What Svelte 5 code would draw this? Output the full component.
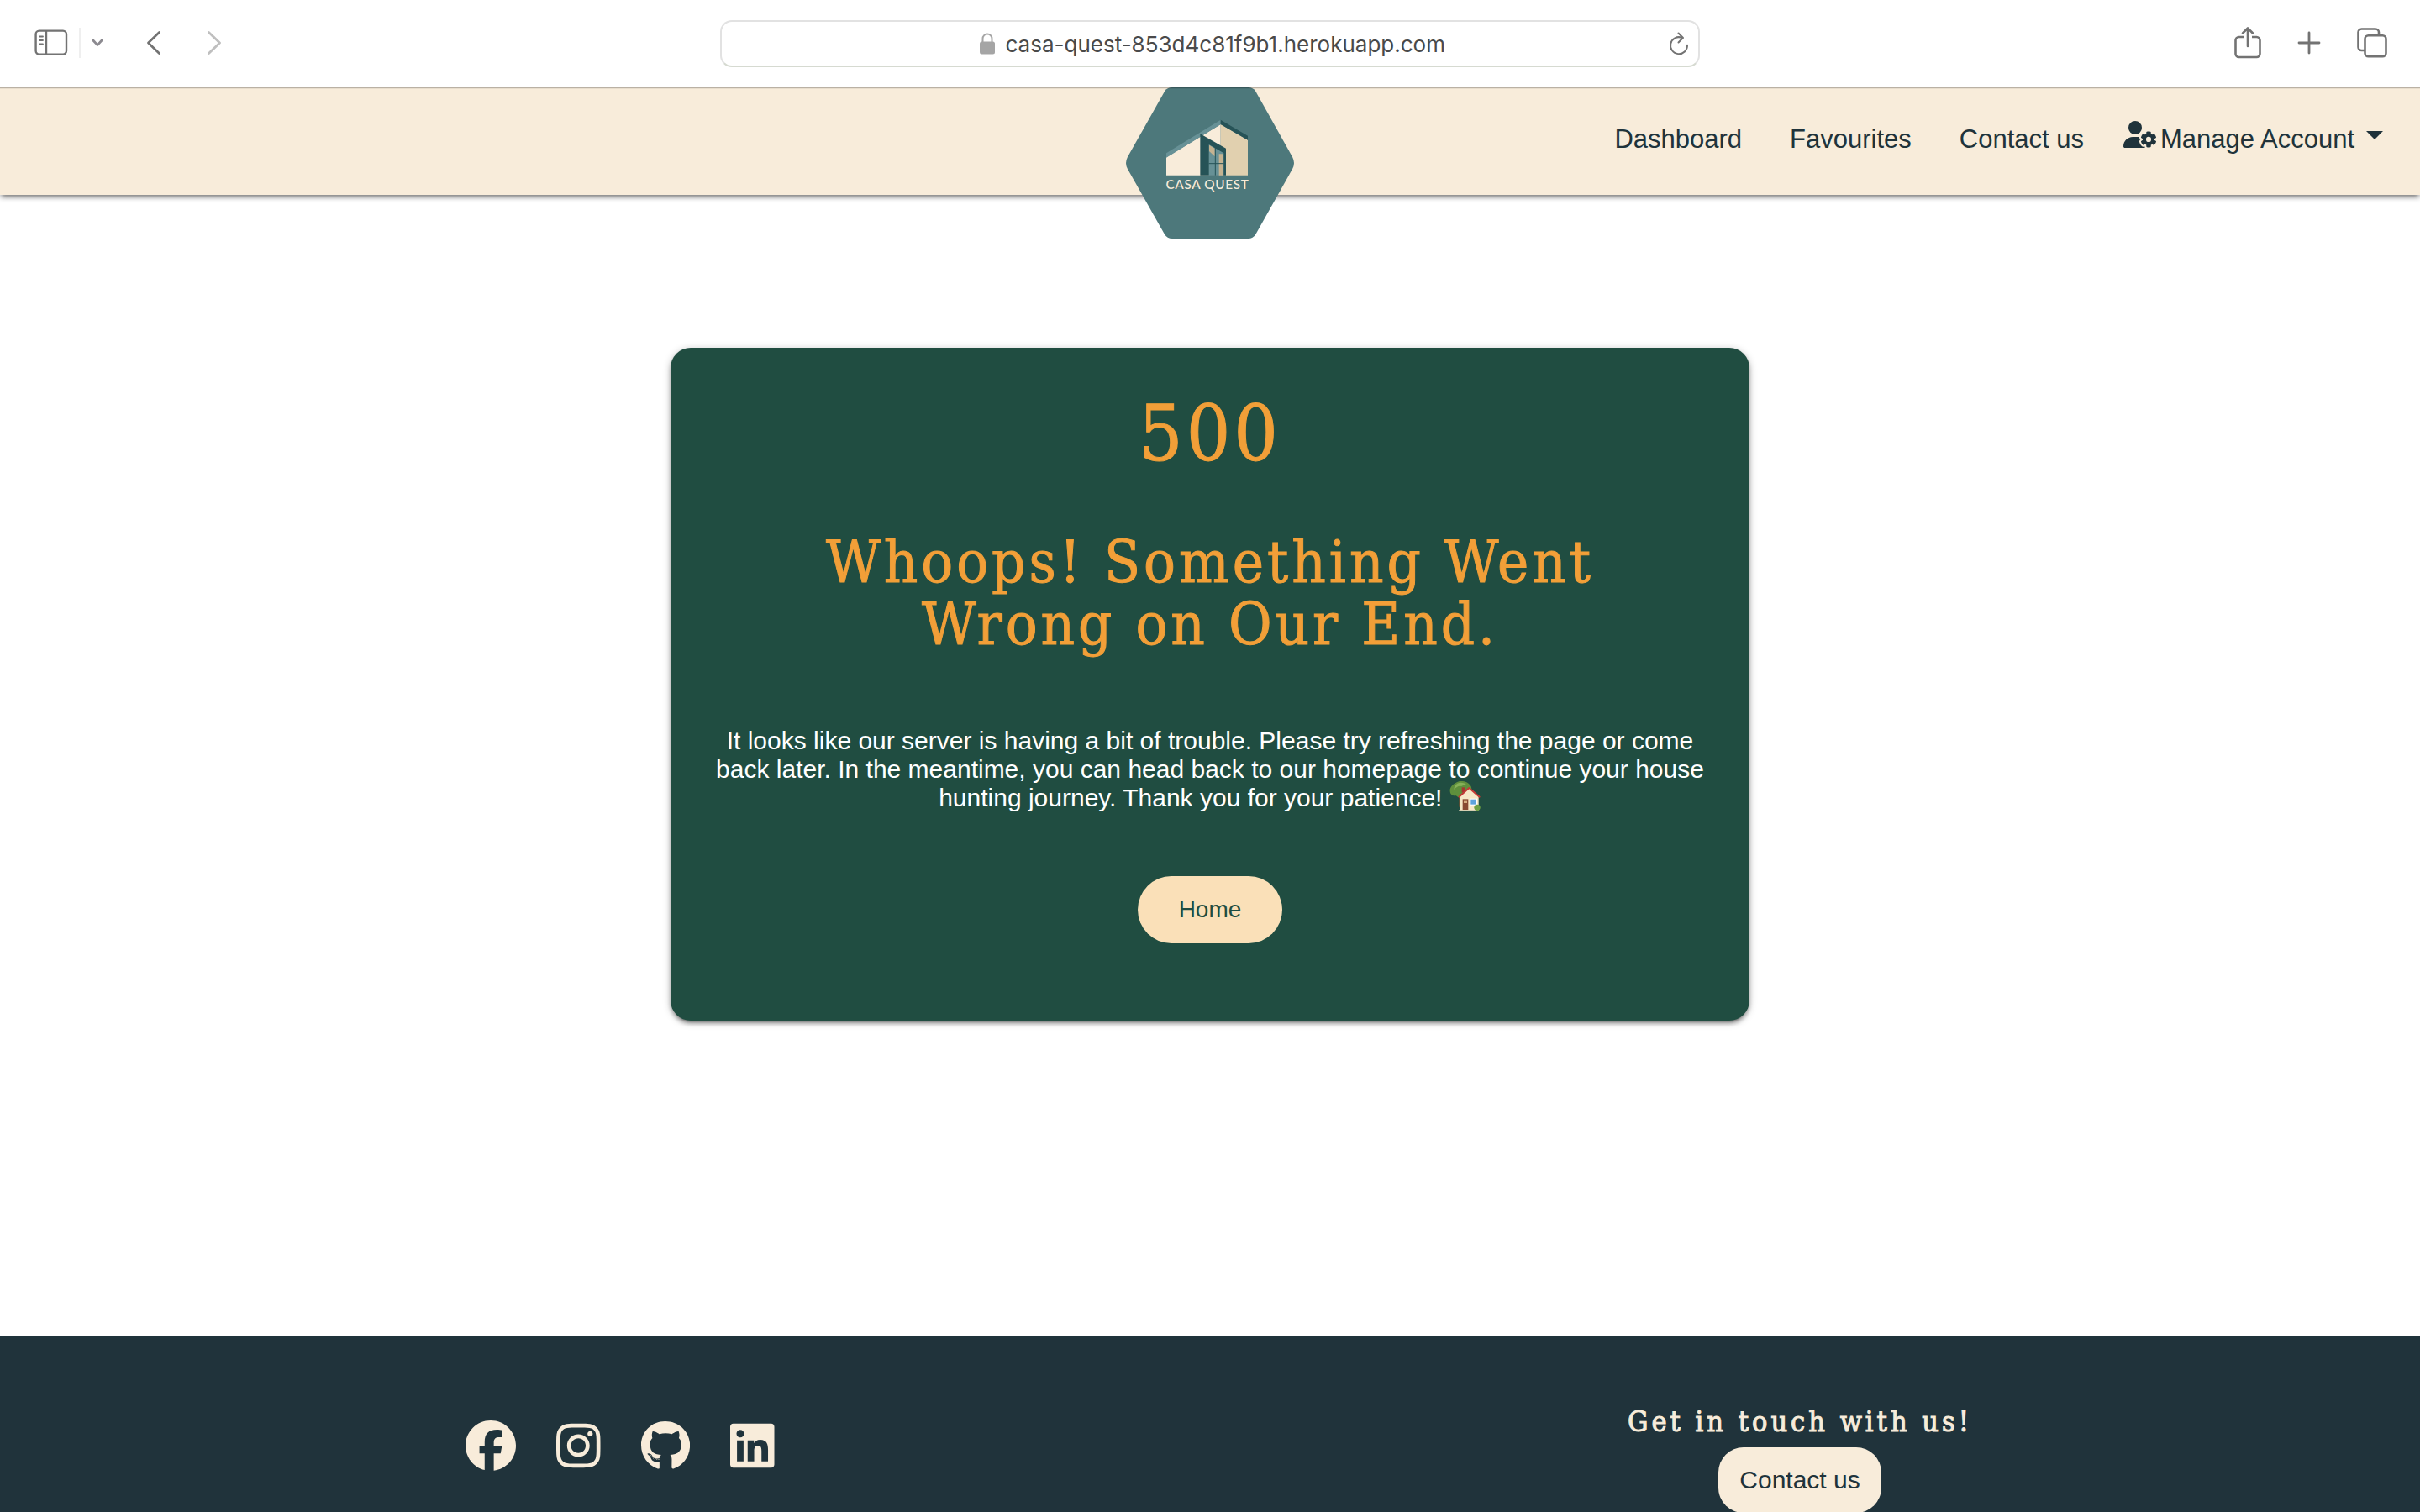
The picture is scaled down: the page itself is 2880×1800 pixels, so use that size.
<script>
  const socials = [
    {
      name: 'Facebook',
      width: 512,
      path: 'M512 256C512 114.6 397.4 0 256 0S0 114.6 0 256C0 376 82.7 476.8 194.2 504.5V334.2H141.4V256h52.8V222.3c0-87.1 39.4-127.5 125-127.5c16.2 0 44.2 3.2 55.7 6.4V172c-6-.6-16.5-1-29.6-1c-42 0-58.2 15.9-58.2 57.2V256h83.6l-14.4 78.2H287V510.1C413.8 494.8 512 386.9 512 256h0z'
    },
    {
      name: 'Instagram',
      width: 448,
      path: 'M224.1 141c-63.6 0-114.9 51.3-114.9 114.9s51.3 114.9 114.9 114.9S339 319.5 339 255.9 287.7 141 224.1 141zm0 189.6c-41.1 0-74.7-33.5-74.7-74.7s33.5-74.7 74.7-74.7 74.7 33.5 74.7 74.7-33.6 74.7-74.7 74.7zm146.4-194.3c0 14.9-12 26.8-26.8 26.8-14.9 0-26.8-12-26.8-26.8s12-26.8 26.8-26.8 26.8 12 26.8 26.8zm76.1 27.2c-1.7-35.9-9.9-67.7-36.2-93.9-26.2-26.2-58-34.4-93.9-36.2-37-2.1-147.9-2.1-184.9 0-35.8 1.7-67.6 9.9-93.9 36.1s-34.4 58-36.2 93.9c-2.1 37-2.1 147.9 0 184.9 1.7 35.9 9.9 67.7 36.2 93.9s58 34.4 93.9 36.2c37 2.1 147.9 2.1 184.9 0 35.9-1.7 67.7-9.9 93.9-36.2 26.2-26.2 34.4-58 36.2-93.9 2.1-37 2.1-147.8 0-184.8zM398.8 388c-7.8 19.6-22.9 34.7-42.6 42.6-29.5 11.7-99.5 9-132.1 9s-102.7 2.6-132.1-9c-19.6-7.8-34.7-22.9-42.6-42.6-11.7-29.5-9-99.5-9-132.1s-2.6-102.7 9-132.1c7.8-19.6 22.9-34.7 42.6-42.6 29.5-11.7 99.5-9 132.1-9s102.7-2.6 132.1 9c19.6 7.8 34.7 22.9 42.6 42.6 11.7 29.5 9 99.5 9 132.1s2.7 102.7-9 132.1z'
    },
    {
      name: 'GitHub',
      width: 496,
      path: 'M165.9 397.4c0 2-2.3 3.6-5.2 3.6-3.3.3-5.6-1.3-5.6-3.6 0-2 2.3-3.6 5.2-3.6 3-.3 5.6 1.3 5.6 3.6zm-31.1-4.5c-.7 2 1.3 4.3 4.3 4.9 2.6 1 5.6 0 6.2-2s-1.3-4.3-4.3-5.2c-2.6-.7-5.5.3-6.2 2.3zm44.2-1.7c-2.9.7-4.9 2.6-4.6 4.9.3 2 2.9 3.3 5.9 2.6 2.9-.7 4.9-2.6 4.6-4.6-.3-1.9-3-3.2-5.9-2.9zM244.8 8C106.1 8 0 113.3 0 252c0 110.9 69.8 205.8 169.5 239.2 12.8 2.3 17.3-5.6 17.3-12.1 0-6.2-.3-40.4-.3-61.4 0 0-70 15-84.7-29.8 0 0-11.4-29.1-27.8-36.6 0 0-22.9-15.7 1.6-15.4 0 0 24.9 2 38.6 25.8 21.9 38.6 58.6 27.5 72.9 20.9 2.3-16 8.8-27.1 16-33.7-55.9-6.2-112.3-14.3-112.3-110.5 0-27.5 7.6-41.3 23.6-58.9-2.6-6.5-11.1-33.3 2.6-67.9 20.9-6.5 69 27 69 27 20-5.6 41.5-8.5 62.8-8.5s42.8 2.9 62.8 8.5c0 0 48.1-33.6 69-27 13.7 34.7 5.2 61.4 2.6 67.9 16 17.7 25.8 31.5 25.8 58.9 0 96.5-58.9 104.2-114.8 110.5 9.2 7.9 17 22.9 17 46.4 0 33.7-.3 75.4-.3 83.6 0 6.5 4.6 14.4 17.3 12.1C428.2 457.8 496 362.9 496 252 496 113.3 383.5 8 244.8 8zM97.2 352.9c-1.3 1-1 3.3.7 5.2 1.6 1.6 3.9 2.3 5.2 1 1.3-1 1-3.3-.7-5.2-1.6-1.6-3.9-2.3-5.2-1zm-10.8-8.1c-.7 1.3.3 2.9 2.3 3.9 1.6 1 3.6.7 4.3-.7.7-1.3-.3-2.9-2.3-3.9-2-.6-3.6-.3-4.3.7zm32.4 35.6c-1.6 1.3-1 4.3 1.3 6.2 2.3 2.3 5.2 2.6 6.5 1 1.3-1.3.7-4.3-1.3-6.2-2.2-2.3-5.2-2.6-6.5-1zm-11.4-14.7c-1.6 1-1.6 3.6 0 5.9 1.6 2.3 4.3 3.3 5.6 2.3 1.6-1.3 1.6-3.9 0-6.2-1.4-2.3-4-3.3-5.6-2z'
    },
    {
      name: 'LinkedIn',
      width: 448,
      path: 'M416 32H31.9C14.3 32 0 46.5 0 64.3v383.4C0 465.5 14.3 480 31.9 480H416c17.6 0 32-14.5 32-32.3V64.3c0-17.8-14.4-32.3-32-32.3zM135.4 416H69V202.2h66.5V416zm-33.2-243c-21.3 0-38.5-17.3-38.5-38.5S80.9 96 102.2 96c21.2 0 38.5 17.3 38.5 38.5 0 21.3-17.2 38.5-38.5 38.5zm282.1 243h-66.4V312c0-24.8-.5-56.7-34.5-56.7-34.6 0-39.9 27-39.9 54.9V416h-66.4V202.2h63.7v29.2h.9c8.9-16.8 30.6-34.5 62.9-34.5 67.2 0 79.7 44.3 79.7 101.9V416z'
    }
  ];
  const links = ['Dashboard', 'Favourites', 'Contact us'];
  let url = $state('casa-quest-853d4c81f9b1.herokuapp.com');
</script>

<div class="window">
  <div class="toolbar">
    <div class="tools">
      <button class="sidebar" aria-label="Show sidebar">
        <svg width="40" height="32" viewBox="0 0 40 32" fill="none" stroke="currentColor" stroke-width="2.4">
          <rect x="1.6" y="1.6" width="36.4" height="28" rx="4" />
          <path d="M14 2v27" />
          <path d="M6 8.5h4M6 13h4M6 17.5h4" stroke-width="1.8" stroke-linecap="round" />
        </svg>
      </button>
      <button class="groups" aria-label="Tab groups">
        <svg width="14" height="10" viewBox="0 0 14 10" fill="none" stroke="#8c8a90" stroke-width="2.8" stroke-linecap="round" stroke-linejoin="round"><path d="M1.6 1.8 7 7.6l5.4-5.8" /></svg>
      </button>
      <button class="back" aria-label="Back">
        <svg width="18" height="30" viewBox="0 0 18 30" fill="none" stroke="currentColor" stroke-width="2.8" stroke-linecap="round" stroke-linejoin="round"><path d="M15.5 2.5 2.5 15l13 12.5" /></svg>
      </button>
      <button class="forward" aria-label="Forward" disabled>
        <svg width="18" height="30" viewBox="0 0 18 30" fill="none" stroke="currentColor" stroke-width="2.8" stroke-linecap="round" stroke-linejoin="round"><path d="M2.5 2.5 15.5 15l-13 12.5" /></svg>
      </button>
    </div>
    <div class="address">
      <svg class="lock" width="18" height="26" viewBox="0 0 18 26"><rect y="10.5" width="18" height="15" rx="2.5" fill="#a5a5a5" /><path d="M3.5 12V7a5.5 5.5 0 0 1 11 0v5" fill="none" stroke="#a5a5a5" stroke-width="2" /></svg>
      <input class="url" aria-label="Address" bind:value={url} />
      <button class="reload" aria-label="Reload">
        <svg width="24" height="28" viewBox="0 0 24 28" fill="none" stroke="currentColor" stroke-width="2" stroke-linecap="round" stroke-linejoin="round">
          <path d="M15.5 6.8A10 10 0 1 0 22 15.8" />
          <path d="M11.5 1.5 17 7l-5.500 5.500" />
        </svg>
      </button>
    </div>
    <div class="actions">
      <button aria-label="Share">
        <svg width="32" height="40" viewBox="0 0 32 40" fill="none" stroke="currentColor" stroke-width="2.6" stroke-linecap="round" stroke-linejoin="round">
          <path d="M11 13H5.500a4 4 0 0 0-4 4v16a4 4 0 0 0 4 4h21a4 4 0 0 0 4-4V17a4 4 0 0 0-4-4H21" stroke-linecap="butt" />
          <path d="M16 24V3M10 8.500l6-6 6 6" />
        </svg>
      </button>
      <button aria-label="New tab">
        <svg width="28" height="28" viewBox="0 0 28 28" fill="none" stroke="currentColor" stroke-width="2.8" stroke-linecap="round"><path d="M14 2v24M2 14h24" /></svg>
      </button>
      <button aria-label="Tab overview">
        <svg width="36" height="36" viewBox="0 0 36 36" fill="none" stroke="currentColor" stroke-width="2.6">
          <path d="M9 27H5.500a4 4 0 0 1-4-4V5.500a4 4 0 0 1 4-4H22a4 4 0 0 1 4 4V9" />
          <rect x="9.500" y="9.300" width="25" height="25" rx="4" />
        </svg>
      </button>
    </div>
  </div>

  <div class="site">
    <header>
      <a class="logo" href="#home" aria-label="Casa Quest home">
        <svg width="200" height="180" viewBox="120 42 600 540">
          <path fill="#4d787b" d="M285 42H556Q574 42 583 56L714 290Q726 312 714 334L583 567Q574 582 556 582H285Q267 582 258 567L126 334Q114 312 126 290L258 56Q267 42 285 42Z" />
          <path fill="#f8ecda" d="M264 292 386 218 458 174V356H264Z" />
          <path fill="#e1d0af" d="M458 174 555 230V356H458Z" />
          <path fill="#679196" d="M264 277 458 158V174L264 293Z" />
          <path fill="#265357" d="M458 158 555 215V230L458 174ZM385 208 477 260V356H385Z" />
          <path fill="#679196" d="M416 246 469 277V356H416Z" />
          <path fill="#c5b391" d="M417 248 437 260V289L417 270ZM452 280H468V356H452Z" />
          <path fill="none" stroke="#265357" stroke-width="3" d="M439 258V356M416 314H470" />
          <text class="brand" x="411" y="405" text-anchor="middle">CASA QUEST</text>
        </svg>
      </a>
      <nav>
        {#each links as link}
          <a href="#{link}">{link}</a>
        {/each}
        <button class="account">
          <svg class="user" width="40" height="34" viewBox="0 0 640 544" fill="currentColor"><path fill-rule="evenodd" d="M224 0a128 128 0 1 1 0 256A128 128 0 1 1 224 0zM178.300 304h91.400c11.800 0 23.400 1.200 34.500 3.300c-2.100 18.500 7.400 35.600 21.800 44.800c-16.600 10.600-26.700 31.600-20 53.300c4 12.900 9.400 25.500 16.400 37.600s15.200 23.100 24.400 33c15.700 16.900 39.600 18.400 57.200 8.700v.9c0 9.200 2.700 18.500 7.900 26.300H29.700C13.300 512 0 498.700 0 482.300C0 383.800 79.800 304 178.300 304zM436 218.200c0-7 4.500-13.300 11.300-14.800c10.500-2.400 21.500-3.700 32.700-3.700s22.200 1.300 32.700 3.700c6.800 1.500 11.300 7.800 11.300 14.800v30.600c7.900 3.400 15.400 7.700 22.300 12.800l24.900-14.300c6.100-3.500 13.700-2.700 18.500 2.400c7.600 8.100 14.300 17.200 20.100 27.200s10.300 20.400 13.500 31c2.100 6.700-1.100 13.700-7.200 17.200l-25 14.400c.4 4 .7 8.100 .7 12.300s-.2 8.200-.7 12.300l25 14.400c6.100 3.500 9.200 10.500 7.200 17.200c-3.300 10.600-7.800 21-13.500 31s-12.500 19.100-20.100 27.200c-4.800 5.100-12.500 5.900-18.500 2.400l-24.900-14.300c-6.900 5.100-14.300 9.400-22.300 12.800l0 30.600c0 7-4.500 13.300-11.300 14.800c-10.500 2.400-21.500 3.700-32.700 3.700s-22.200-1.300-32.700-3.700c-6.800-1.500-11.300-7.800-11.300-14.800V454.800c-8-3.400-15.600-7.700-22.500-12.900l-24.700 14.300c-6.100 3.500-13.700 2.700-18.500-2.400c-7.600-8.100-14.300-17.200-20.100-27.200s-10.300-20.400-13.500-31c-2.100-6.700 1.100-13.700 7.200-17.200l24.800-14.300c-.4-4.100-.7-8.200-.7-12.400s.2-8.300 .7-12.400L343.800 325c-6.100-3.500-9.200-10.500-7.200-17.200c3.300-10.600 7.700-21 13.500-31s12.500-19.100 20.100-27.200c4.800-5.100 12.400-5.900 18.500-2.400l24.800 14.300c6.900-5.100 14.500-9.400 22.500-12.900V218.200zm92.100 133.500a48.100 48.100 0 1 0 -96.100 0 48.100 48.100 0 1 0 96.100 0z" /></svg>
          <span>Manage Account</span>
          <svg class="caret" width="20" height="10" viewBox="0 0 20 10" fill="currentColor"><path d="M0 0h20L10 10z" /></svg>
        </button>
      </nav>
    </header>

    <main>
      <section class="card">
        <h1>500</h1>
        <h2>Whoops! Something Went<br />Wrong on Our End.</h2>
        <p>
          It looks like our server is having a bit of trouble. Please try refreshing the page or come<br />
          back later. In the meantime, you can head back to our homepage to continue your house<br />
          hunting journey. Thank you for your patience!
          <svg class="house" role="img" aria-label="House with garden" width="38" height="36" viewBox="0 0 114 108">
            <path fill="#7a5230" d="M34 50h12v42H34z" />
            <path fill="#5f8f3c" d="M36 0C52-2 66 4 74 14c8 10 6 22-6 30L48 56c-10 4-20 2-24-4C10 54 2 46 2 36 0 24 10 8 36 0Z" />
            <path fill="#86b158" d="M34 6c12-2 22 2 28 8-8-2-14 0-20 4-10-2-18 4-26 12 0-10 6-20 18-24Z" />
            <path fill="#a5372f" d="M44 22h12v18H44z" />
            <path fill="#f6e8c6" d="M36 54 70 24l34 30v50H36Z" />
            <path fill="none" stroke="#c23a36" stroke-width="6" stroke-linecap="round" stroke-linejoin="round" d="M34 56 70 24l37 32" />
            <path fill="#8a4b32" d="M47 64h20v40H47z" />
            <path fill="#d7ad80" d="M51 68h12v10H51z" />
            <path fill="#fff" d="M73 62h26v24H73z" />
            <path fill="#5ea3dc" d="M76 65h20v18H76z" />
            <circle cx="99" cy="94" r="11" fill="#6fa044" />
            <path fill="#d6cfb2" d="M34 102h58v5H34z" />
          </svg>
        </p>
        <a class="home" href="#home">Home</a>
      </section>
    </main>

    <footer>
      <div class="social">
        {#each socials as s}
          <a href="#{s.name}" aria-label={s.name}>
            <svg height="60" viewBox="0 0 {s.width} 512" fill="currentColor"><path d={s.path} /></svg>
          </a>
        {/each}
      </div>
      <div class="touch">
        <h3>Get in touch with us!</h3>
        <a class="contact" href="#contact">Contact us</a>
      </div>
    </footer>
  </div>
</div>

<style>
  :global(body) {
    margin: 0;
    background: #fff;
  }
  .window {
    display: flex;
    flex-direction: column;
    height: 100vh;
    overflow: hidden;
    font-family: "Liberation Sans", Arial, sans-serif;
    font-size: 30px;
    color: #20333b;
  }
  button {
    display: flex;
    align-items: center;
    padding: 0;
    border: 0;
    background: none;
    color: inherit;
    font: inherit;
  }
  a {
    color: inherit;
    text-decoration: none;
  }
  svg {
    display: block;
    flex: none;
  }
  .toolbar {
    position: relative;
    z-index: 2;
    display: grid;
    grid-template-columns: 1fr 1166px 1fr;
    align-items: center;
    flex: none;
    height: 104px;
    color: #737373;
    background: #fff;
    box-shadow: 0 1px 0 rgba(0, 0, 0, 0.2), 0 2px 0 rgba(0, 0, 0, 0.06);
  }
  .tools {
    display: flex;
    align-items: center;
    padding: 0 0 2px 41px;
  }
  .sidebar {
    padding-right: 13px;
  }
  .groups {
    height: 36px;
    padding-left: 13px;
    border-left: 2px solid #efefef;
  }
  .back {
    margin-left: 51px;
  }
  .forward {
    margin-left: 54px;
    color: #bfbfbf;
  }
  .address {
    box-sizing: border-box;
    display: flex;
    align-items: center;
    justify-content: center;
    position: relative;
    height: 56px;
    border: 2px solid #e2e2e2;
    border-bottom-color: #d6dad1;
    border-radius: 14px;
  }
  .url {
    width: 528px;
    margin-left: 13px;
    padding: 0;
    border: 0;
    outline: 0;
    background: none;
    color: #4a4a4a;
    font-family: Inter, sans-serif;
    font-size: 26px;
  }
  .lock {
    margin-left: 10px;
  }
  .reload {
    position: absolute;
    right: 11px;
  }
  .actions {
    display: flex;
    justify-content: flex-end;
    align-items: center;
    gap: 43px;
    padding: 0 39px 2px 0;
  }
  .site {
    display: flex;
    flex-direction: column;
    flex: 1 0 auto;
  }
  header {
    display: grid;
    grid-template-columns: 1fr 200px 1fr;
    height: 128px;
    background: #f8ecda;
    box-shadow: 0 3px 6px rgba(0, 0, 0, 0.35), 0 6px 4px -4px rgba(0, 0, 0, 0.25);
  }
  .logo {
    grid-column: 2;
  }
  .brand {
    font-family: Lato, sans-serif;
    font-size: 46px;
    font-weight: 500;
    letter-spacing: 2px;
    fill: #f8ecda;
  }
  nav {
    display: flex;
    justify-content: flex-end;
    align-items: center;
    height: 124px;
    gap: 57px;
    padding-right: 44px;
    font-size: 31px;
  }
  .account {
    margin-left: -10px;
  }
  .user {
    margin: 0 4px 10px 0;
  }
  .caret {
    margin: 0 0 10px 14px;
  }
  main {
    display: flex;
    justify-content: center;
    align-items: flex-start;
    padding: 182px 0 375px;
  }
  .card {
    box-sizing: border-box;
    display: flex;
    flex-direction: column;
    align-items: center;
    width: 1284px;
    padding: 54px 40px 92px;
    border-radius: 24px;
    background: #204d41;
    color: #fff;
    text-align: center;
    box-shadow: 0 4px 4px rgba(0, 0, 0, 0.24), 0 6px 2px -4px rgba(0, 0, 0, 0.2), 0 2px 10px rgba(0, 0, 0, 0.26);
  }
  h1,
  h2,
  h3 {
    margin: 0;
    font-family: "DejaVu Serif Condensed", "DejaVu Serif", serif;
    font-weight: 400;
    letter-spacing: 4px;
  }
  h1,
  h2 {
    color: #f29f38;
    -webkit-text-stroke: 1px #f29f38;
  }
  h1 {
    font-size: 92px;
    line-height: 98px;
  }
  h2 {
    margin-top: 66px;
    font-size: 70px;
    line-height: 74px;
  }
  p {
    margin: 85px 0 0;
    line-height: 34px;
    white-space: nowrap;
  }
  .house {
    display: inline-block;
    height: 36px;
    margin: -12px 0 -4px;
    vertical-align: middle;
  }
  .home {
    margin-top: 76px;
    padding: 0 49px;
    border-radius: 40px;
    background: #fae0b8;
    color: #204d41;
    font-size: 28px;
    line-height: 80px;
  }
  footer {
    display: grid;
    grid-template-columns: 1fr 1fr;
    flex: 1 0 auto;
    padding: 80px 36px;
    background: #20333b;
    color: #f8ecda;
  }
  .social {
    display: flex;
    justify-content: center;
    gap: 48px;
    padding-top: 21px;
  }
  .touch {
    display: flex;
    flex-direction: column;
    align-items: center;
  }
  h3 {
    font-size: 34px;
    line-height: 44px;
    -webkit-text-stroke: 1px #f8ecda;
  }
  .contact {
    margin-top: 9px;
    padding: 0 25px;
    border-radius: 30px;
    background: #f8ecda;
    color: #20333b;
    line-height: 78px;
  }
</style>
